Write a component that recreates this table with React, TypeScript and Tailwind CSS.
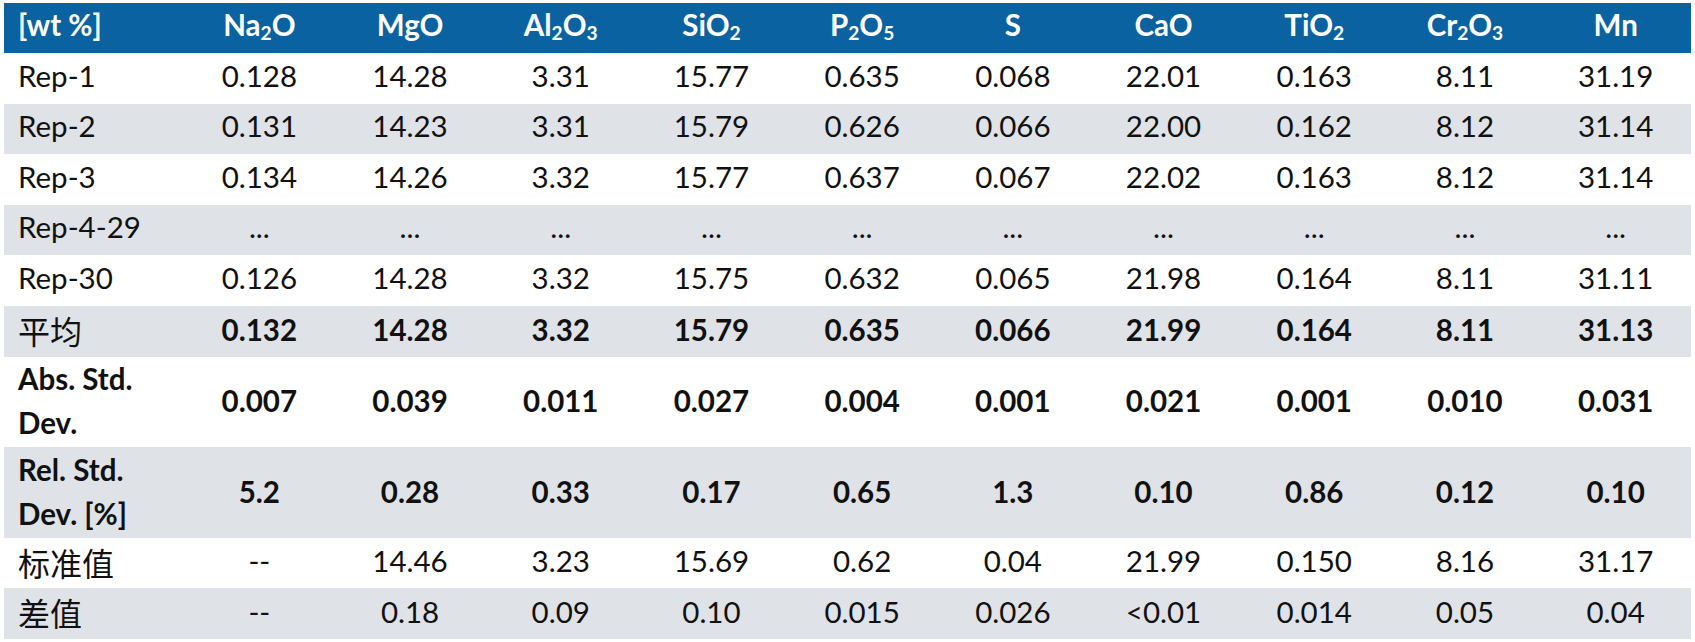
import type { ReactNode } from 'react';

type Row = {
  label: ReactNode;
  values: string[];
  bold?: boolean;
  boldLabel?: boolean;
  cjk?: boolean;
  tall?: boolean;
  grey?: boolean;
};

const Sub = ({ children }: { children: ReactNode }) => (
  <sub className="text-[0.65em] bottom-[-0.2em]">{children}</sub>
);

const headers: ReactNode[] = [
  <>Na<Sub>2</Sub>O</>,
  <>MgO</>,
  <>Al<Sub>2</Sub>O<Sub>3</Sub></>,
  <>SiO<Sub>2</Sub></>,
  <>P<Sub>2</Sub>O<Sub>5</Sub></>,
  <>S</>,
  <>CaO</>,
  <>TiO<Sub>2</Sub></>,
  <>Cr<Sub>2</Sub>O<Sub>3</Sub></>,
  <>Mn</>,
];

const rows: Row[] = [
  { label: 'Rep-1', values: ['0.128', '14.28', '3.31', '15.77', '0.635', '0.068', '22.01', '0.163', '8.11', '31.19'] },
  { label: 'Rep-2', grey: true, values: ['0.131', '14.23', '3.31', '15.79', '0.626', '0.066', '22.00', '0.162', '8.12', '31.14'] },
  { label: 'Rep-3', values: ['0.134', '14.26', '3.32', '15.77', '0.637', '0.067', '22.02', '0.163', '8.12', '31.14'] },
  { label: 'Rep-4-29', grey: true, values: Array(10).fill('...') },
  { label: 'Rep-30', values: ['0.126', '14.28', '3.32', '15.75', '0.632', '0.065', '21.98', '0.164', '8.11', '31.11'] },
  { label: '平均', cjk: true, bold: true, grey: true, values: ['0.132', '14.28', '3.32', '15.79', '0.635', '0.066', '21.99', '0.164', '8.11', '31.13'] },
  {
    label: <>Abs. Std.<br />Dev.</>,
    bold: true,
    boldLabel: true,
    tall: true,
    values: ['0.007', '0.039', '0.011', '0.027', '0.004', '0.001', '0.021', '0.001', '0.010', '0.031'],
  },
  {
    label: <>Rel. Std.<br />Dev. [%]</>,
    bold: true,
    boldLabel: true,
    tall: true,
    grey: true,
    values: ['5.2', '0.28', '0.33', '0.17', '0.65', '1.3', '0.10', '0.86', '0.12', '0.10'],
  },
  { label: '标准值', cjk: true, values: ['--', '14.46', '3.23', '15.69', '0.62', '0.04', '21.99', '0.150', '8.16', '31.17'] },
  { label: '差值', cjk: true, grey: true, values: ['--', '0.18', '0.09', '0.10', '0.015', '0.026', '<0.01', '0.014', '0.05', '0.04'] },
];

export default function App() {
  return (
    <div className="w-[1695px] h-[642px] bg-white pt-[3px] pl-[4px] font-['Lato',sans-serif] text-[29.5px] text-[#111111]">
      <div className="w-[1687px]">
        {/* Header */}
        <div className="grid grid-cols-[180px_repeat(10,minmax(0,1fr))] h-[50px] pb-[5px] bg-[#0b62a0] text-white font-bold">
          <div className="flex items-center pl-[14px]">[wt %]</div>
          {headers.map((h, i) => (
            <div key={i} className="flex items-center justify-center">
              <span>{h}</span>
            </div>
          ))}
        </div>

        {rows.map((row, ri) => (
          <div
            key={ri}
            className={`grid grid-cols-[180px_repeat(10,minmax(0,1fr))] ${row.tall ? 'h-[90.5px] pb-[1px]' : 'h-[50.6px] pb-[5px]'} ${
              row.grey ? 'bg-[#dfe2e6]' : 'bg-white'
            }`}
          >
            <div
              className={`flex items-center pl-[14px] ${row.boldLabel ? 'font-bold leading-[44px]' : ''} ${
                row.cjk ? "font-['Noto_Sans_CJK_SC',sans-serif] text-[32px] font-normal" : ''
              }`}
            >
              <span>{row.label}</span>
            </div>
            {row.values.map((v, i) => (
              <div key={i} className={`flex items-center justify-center ${row.bold ? 'font-bold' : ''}`}>
                {v}
              </div>
            ))}
          </div>
        ))}
      </div>
    </div>
  );
}
